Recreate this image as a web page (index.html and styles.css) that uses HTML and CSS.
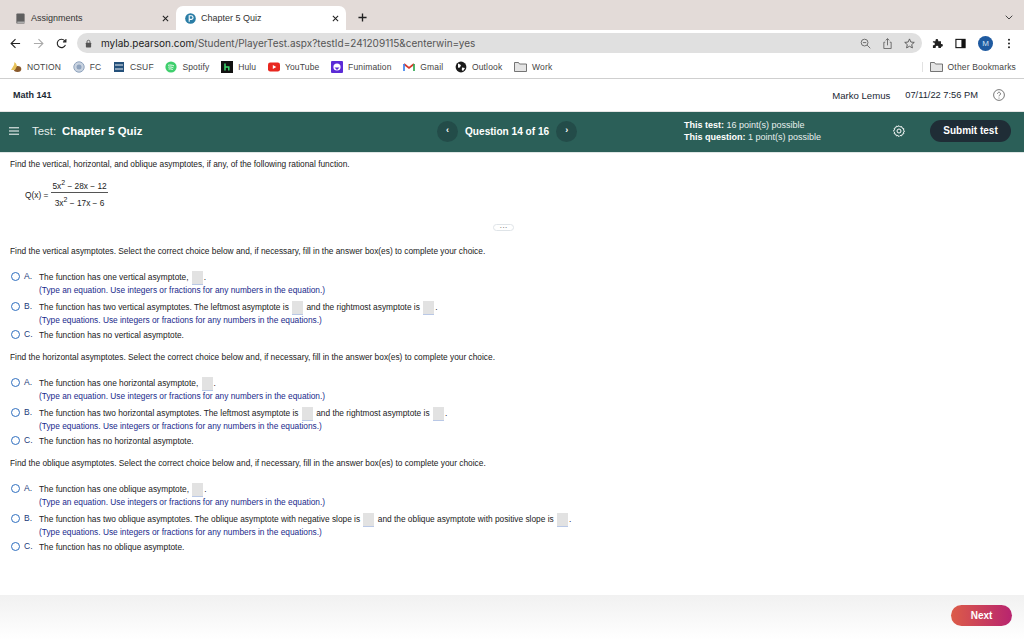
FILE: index.html
```html
<!DOCTYPE html>
<html lang="en">

<head>
    <meta charset="UTF-8">
    <title>Chapter 5 Quiz</title>
    <link rel="stylesheet" href="styles.css">
</head>

<body>
    <!-- Browser chrome -->
    <div class="tabstrip">
        <div class="tab">
            <svg class="tab-icon" viewBox="0 0 12 12"><rect x="1.5" y="0.5" width="9" height="11" rx="1" fill="#5f5f5f"/><rect x="2.5" y="9.5" width="8" height="1" fill="#ddd"/></svg>
            <span class="tab-title">Assignments</span>
            <svg class="tab-close" viewBox="0 0 8 8"><path d="M1 1l6 6M7 1L1 7" stroke="#222" stroke-width="1.2"/></svg>
        </div>
        <div class="tab tab-active">
            <svg class="tab-icon" viewBox="0 0 12 12"><circle cx="6" cy="6" r="5.8" fill="#2a7da6"/><path d="M4.6 9.5V3h2.2a1.9 1.9 0 0 1 0 3.9H4.6" fill="none" stroke="#fff" stroke-width="1.2"/></svg>
            <span class="tab-title">Chapter 5 Quiz</span>
            <svg class="tab-close" viewBox="0 0 8 8"><path d="M1 1l6 6M7 1L1 7" stroke="#222" stroke-width="1.2"/></svg>
        </div>
        <svg class="new-tab" viewBox="0 0 10 10"><path d="M5 .5v9M.5 5h9" stroke="#222" stroke-width="1.5"/></svg>
        <svg class="tabs-menu" viewBox="0 0 8 5"><path d="M.7.7L4 4l3.3-3.3" fill="none" stroke="#444" stroke-width="1"/></svg>
    </div>

    <div class="toolbar">
        <svg class="nav-icon" viewBox="0 0 12 12"><path d="M11 6H1.5M6 1.2L1.2 6 6 10.8" fill="none" stroke="#222" stroke-width="1.2"/></svg>
        <svg class="nav-icon" viewBox="0 0 12 12"><path d="M1 6h9.5M6 1.2L10.8 6 6 10.8" fill="none" stroke="#aaa" stroke-width="1.2"/></svg>
        <svg class="nav-icon" viewBox="0 0 12 12"><path d="M10.3 7.5A4.6 4.6 0 1 1 9.4 2.8L10.8 4.2M10.8 1v3.2H7.6" fill="none" stroke="#222" stroke-width="1.2"/></svg>
        <div class="omnibox">
            <svg class="lock" viewBox="0 0 8 10"><rect x="1" y="4" width="6" height="5.5" rx=".8" fill="#555"/><path d="M2.3 4.5V3a1.7 1.7 0 0 1 3.4 0v1.5" fill="none" stroke="#555"/></svg>
            <span class="url"><b>mylab.pearson.com</b>/Student/PlayerTest.aspx?testId=241209115&amp;centerwin=yes</span>
            <svg class="omni-icon" viewBox="0 0 12 12"><circle cx="5" cy="5" r="3.7" fill="none" stroke="#666"/><path d="M3.2 5h3.6M7.8 7.8l3.4 3.4" stroke="#666"/></svg>
            <svg class="omni-icon" viewBox="0 0 12 12"><path d="M3.5 4.6H2v6.9h8V4.6H8.5M6 8V.8M4 2.6L6 .7l2 1.9" fill="none" stroke="#666"/></svg>
            <svg class="omni-icon" viewBox="0 0 12 12"><path d="M6 1l1.5 3.4 3.7.4-2.8 2.4.8 3.6L6 9l-3.2 1.8.8-3.6L.8 4.8l3.7-.4z" fill="none" stroke="#555"/></svg>
        </div>
        <svg class="ext-icon" viewBox="0 0 12 12"><path d="M1 3.5h2.8v-.9a1.500 1.500 0 0 1 3 0v.9h3v3h.6a1.500 1.500 0 0 1 0 3h-.6V11H7V9.900a1.500 1.500 0 0 0-3 0V11H1V8h.6a1.500 1.500 0 0 0 0-3H1z" fill="#222"/></svg>
        <svg class="ext-icon" viewBox="0 0 12 12"><rect x="1" y="1.5" width="10" height="9" fill="#fff" stroke="#111" stroke-width="1.2"/><rect x="7" y="1.5" width="4" height="9" fill="#111"/></svg>
        <span class="avatar">M</span>
        <svg class="kebab" viewBox="0 0 4 12"><circle cx="2" cy="2" r="1.1" fill="#222"/><circle cx="2" cy="6" r="1.1" fill="#222"/><circle cx="2" cy="10" r="1.1" fill="#222"/></svg>
    </div>

    <div class="bookmarks">
        <span class="bookmark">
            <svg viewBox="0 0 12 12"><ellipse cx="7.5" cy="8" rx="3.8" ry="3" fill="#8a5a2b"/><path d="M1 9l3-5 .5-3L6 2.5l1 2.500-2 4z" fill="#e8c35a"/></svg>NOTION
        </span>
        <span class="bookmark">
            <svg viewBox="0 0 12 12"><circle cx="6" cy="6" r="5.2" fill="#c9d3e0" stroke="#8fa3bd"/><circle cx="6" cy="6" r="2.5" fill="#8fa3bd"/></svg>FC
        </span>
        <span class="bookmark">
            <svg viewBox="0 0 12 12"><rect x="1" y="1" width="10" height="10" fill="#24507a"/><path d="M2 4h8M2 8h8" stroke="#e9eef3"/></svg>CSUF
        </span>
        <span class="bookmark">
            <svg viewBox="0 0 12 12"><circle cx="6" cy="6" r="5.6" fill="#3fcf6d"/><path d="M3 4.3c2-.5 4-.3 6 .6M3.3 6.2c1.800-.4 3.500-.2 5.100.6M3.600 8c1.500-.3 2.900-.1 4.200.5" fill="none" stroke="#fff" stroke-width=".9"/></svg>Spotify
        </span>
        <span class="bookmark">
            <svg viewBox="0 0 12 12"><rect width="12" height="12" fill="#111"/><path d="M4 2.5v7M4 6h3.8v3.5" fill="none" stroke="#3dd66d" stroke-width="1.5"/></svg>Hulu
        </span>
        <span class="bookmark">
            <svg viewBox="0 0 12 12"><rect y="1.5" width="12" height="9" rx="2.2" fill="#e8271f"/><path d="M4.800 4v4L8.300 6z" fill="#fff"/></svg>YouTube
        </span>
        <span class="bookmark">
            <svg viewBox="0 0 12 12"><rect width="12" height="12" rx="1" fill="#5b2bd6"/><circle cx="6" cy="6" r="3.6" fill="#fff"/><path d="M3.5 6.5h5L6 9z" fill="#5b2bd6"/></svg>Funimation
        </span>
        <span class="bookmark">
            <svg viewBox="0 0 12 12"><path d="M1 3l5 4 5-4" fill="none" stroke="#d8382c" stroke-width="1.7"/><path d="M1 3v7" stroke="#3f82ed" stroke-width="1.7"/><path d="M11 3v7" stroke="#32a853" stroke-width="1.7"/></svg>Gmail
        </span>
        <span class="bookmark">
            <svg viewBox="0 0 12 12"><circle cx="6" cy="6" r="5.4" fill="#1c1c1c"/><path d="M3 2.5l3 1.5-1 2.500-2 .2zM7 6.500l3 .5-2 3-1.200-1z" fill="#fff"/></svg>Outlook
        </span>
        <span class="bookmark">
            <svg class="folder" viewBox="0 0 13 10"><path d="M.5 9.5V.5h4l1 1.5h7v7.500z" fill="#e4e4e4" stroke="#555" stroke-width=".8"/></svg>Work
        </span>
        <span class="bookmark bookmark-other">
            <svg class="folder" viewBox="0 0 13 10"><path d="M.5 9.5V.5h4l1 1.5h7v7.500z" fill="#e4e4e4" stroke="#555" stroke-width=".8"/></svg>Other Bookmarks
        </span>
    </div>

    <!-- Course header -->
    <header class="course-bar">
        <span class="course-name">Math 141</span>
        <span class="student">Marko Lemus</span>
        <span class="stamp">07/11/22 7:56 PM</span>
        <svg class="help" viewBox="0 0 12 12"><circle cx="6" cy="6" r="5.4" fill="none" stroke="#555" stroke-width=".8"/><path d="M4.500 4.700a1.500 1.500 0 1 1 2.300 1.300c-.6.4-.8.7-.8 1.300" fill="none" stroke="#555" stroke-width=".8"/><circle cx="6" cy="8.9" r=".5" fill="#555"/></svg>
    </header>

    <div class="test-bar">
        <div class="test-title">
            <svg class="menu-icon" viewBox="0 0 10 8"><path d="M0 .8h10M0 4h10M0 7.2h10" stroke="#fff" stroke-width="1"/></svg>
            <span class="test-label">Test:</span>
            <b class="test-name">Chapter 5 Quiz</b>
        </div>
        <div class="pager">
            <span class="pager-btn">&#8249;</span>
            <b class="pager-text">Question 14 of 16</b>
            <span class="pager-btn">&#8250;</span>
        </div>
        <div class="points">
            <div><b>This test:</b> 16 point(s) possible</div>
            <div><b>This question:</b> 1 point(s) possible</div>
        </div>
        <svg class="gear" viewBox="0 0 12 12"><path d="M6 .7l1.100 1.200 1.600-.3.500 1.600 1.600.5-.3 1.600L11.600 6l-1.100 1.100.3 1.600-1.600.5-.5 1.600-1.600-.3L6 11.600l-1.100-1.100-1.600.3-.5-1.600-1.600-.5.3-1.600L.4 6l1.100-1.100-.3-1.600 1.600-.5.5-1.600 1.600.3z" fill="none" stroke="#fff" stroke-width="1"/><circle cx="6" cy="6" r="2" fill="none" stroke="#fff" stroke-width="1"/></svg>
        <span class="submit-btn">Submit test</span>
    </div>

    <!-- Question -->
    <main class="question">
        <p class="prompt">Find the vertical, horizontal, and oblique asymptotes, if any, of the following rational function.</p>

        <div class="formula">
            <span>Q(x) =</span>
            <span class="fraction">
                <span class="numer">5x<sup>2</sup> &minus; 28x &minus; 12</span>
                <span class="denom">3x<sup>2</sup> &minus; 17x &minus; 6</span>
            </span>
        </div>

        <div class="divider-row"><span class="more-pill">&middot;&middot;&middot;</span></div>

        <section class="part part-first">
            <p class="prompt">Find the vertical asymptotes. Select the correct choice below and, if necessary, fill in the answer box(es) to complete your choice.</p>
            <div class="choice">
                <span class="radio"></span><span class="letter">A.</span>
                <div>
                    <div class="choice-text">The function has one vertical asymptote, <span class="box"></span>.</div>
                    <div class="hint">(Type an equation. Use integers or fractions for any numbers in the equation.)</div>
                </div>
            </div>
            <div class="choice">
                <span class="radio"></span><span class="letter">B.</span>
                <div>
                    <div class="choice-text">The function has two vertical asymptotes. The leftmost asymptote is <span class="box"></span> and the rightmost asymptote is <span class="box"></span>.</div>
                    <div class="hint">(Type equations. Use integers or fractions for any numbers in the equations.)</div>
                </div>
            </div>
            <div class="choice">
                <span class="radio"></span><span class="letter">C.</span>
                <div class="choice-text">The function has no vertical asymptote.</div>
            </div>
        </section>

        <section class="part">
            <p class="prompt">Find the horizontal asymptotes. Select the correct choice below and, if necessary, fill in the answer box(es) to complete your choice.</p>
            <div class="choice">
                <span class="radio"></span><span class="letter">A.</span>
                <div>
                    <div class="choice-text">The function has one horizontal asymptote, <span class="box"></span>.</div>
                    <div class="hint">(Type an equation. Use integers or fractions for any numbers in the equation.)</div>
                </div>
            </div>
            <div class="choice">
                <span class="radio"></span><span class="letter">B.</span>
                <div>
                    <div class="choice-text">The function has two horizontal asymptotes. The leftmost asymptote is <span class="box"></span> and the rightmost asymptote is <span class="box"></span>.</div>
                    <div class="hint">(Type equations. Use integers or fractions for any numbers in the equations.)</div>
                </div>
            </div>
            <div class="choice">
                <span class="radio"></span><span class="letter">C.</span>
                <div class="choice-text">The function has no horizontal asymptote.</div>
            </div>
        </section>

        <section class="part">
            <p class="prompt">Find the oblique asymptotes. Select the correct choice below and, if necessary, fill in the answer box(es) to complete your choice.</p>
            <div class="choice">
                <span class="radio"></span><span class="letter">A.</span>
                <div>
                    <div class="choice-text">The function has one oblique asymptote, <span class="box"></span>.</div>
                    <div class="hint">(Type an equation. Use integers or fractions for any numbers in the equation.)</div>
                </div>
            </div>
            <div class="choice">
                <span class="radio"></span><span class="letter">B.</span>
                <div>
                    <div class="choice-text">The function has two oblique asymptotes. The oblique asymptote with negative slope is <span class="box"></span> and the oblique asymptote with positive slope is <span class="box"></span>.</div>
                    <div class="hint">(Type equations. Use integers or fractions for any numbers in the equations.)</div>
                </div>
            </div>
            <div class="choice">
                <span class="radio"></span><span class="letter">C.</span>
                <div class="choice-text">The function has no oblique asymptote.</div>
            </div>
        </section>
    </main>

    <footer class="page-footer">
        <span class="next-btn">Next</span>
    </footer>
</body>

</html>
```

FILE: styles.css
```css
/* General Styles */
body {
    margin: 0;
    font-family: 'Liberation Sans', Arial, sans-serif;
    color: #222;
    background: #fff;
    display: flex;
    flex-direction: column;
    height: 640px;
    overflow: hidden;
}

svg {
    display: block;
    flex: none;
}

/* Browser chrome */
.tabstrip {
    height: 30px;
    flex: none;
    background: #e3dbd8;
    display: flex;
    align-items: flex-end;
    box-sizing: border-box;
    padding-left: 6px;
}

.tab {
    width: 170px;
    height: 24px;
    box-sizing: border-box;
    padding: 0 7px 0 9px;
    display: flex;
    align-items: center;
    font-size: 9px;
    color: #333;
}

.tab-active {
    background: #fff;
    border-radius: 7px 7px 0 0;
}

.tab-icon {
    width: 11px;
    height: 11px;
    margin-right: 5px;
}

.tab-title {
    flex: 1;
    white-space: nowrap;
}

.tab-close {
    width: 7px;
    height: 7px;
}

.new-tab {
    width: 9px;
    height: 9px;
    margin: 0 0 8px 12px;
}

.tabs-menu {
    width: 8px;
    height: 5px;
    margin: 0 11px 10px auto;
}

.toolbar {
    height: 26px;
    flex: none;
    display: flex;
    align-items: center;
    padding-left: 10px;
    box-sizing: border-box;
}

.nav-icon {
    width: 11px;
    height: 11px;
    margin-right: 12px;
}

.omnibox {
    flex: 1;
    height: 20px;
    margin: 0 10px 0 -2px;
    background: #e0e0e0;
    border-radius: 10px;
    display: flex;
    align-items: center;
    padding: 0 7px 0 8px;
    box-sizing: border-box;
}

.lock {
    width: 7px;
    height: 9px;
    margin-right: 9px;
}

.url {
    flex: 1;
    font-size: 10px;
    color: #555;
    font-family: 'Inter', 'Liberation Sans', sans-serif;
    white-space: nowrap;
}

.url b {
    font-weight: 400;
    color: #222;
}

.omni-icon {
    width: 11px;
    height: 11px;
    margin-left: 11px;
}

.ext-icon {
    width: 11px;
    height: 11px;
    margin: 0 12px 0 0;
}

.avatar {
    width: 15px;
    height: 15px;
    border-radius: 50%;
    background: #1f5aa0;
    color: #cfe0f2;
    font-size: 8px;
    text-align: center;
    line-height: 15px;
    margin-right: 14px;
}

.kebab {
    width: 4px;
    height: 11px;
    margin-right: 13px;
}

.bookmarks {
    height: 23px;
    flex: none;
    box-sizing: border-box;
    border-bottom: 1px solid #cfcfcf;
    display: flex;
    align-items: center;
    padding: 0 8px 0 10px;
    font-size: 8.5px;
    letter-spacing: .15px;
    color: #444;
    gap: 11.7px;
}

.bookmark {
    display: flex;
    align-items: center;
    white-space: nowrap;
}

.bookmark svg {
    width: 12px;
    height: 12px;
    margin-right: 5px;
}

.bookmark svg.folder {
    width: 13px;
    height: 10px;
}

.bookmark-other {
    margin-left: auto;
    border-left: 1px solid #e2e2e2;
    padding-left: 7px;
}

/* Course header */
.course-bar {
    height: 33px;
    flex: none;
    box-sizing: border-box;
    display: flex;
    align-items: center;
    padding: 0 19px 0 13px;
    font-size: 9.6px;
    color: #1a2733;
    border-bottom: 1px solid #e4e4e4;
}

.course-name {
    flex: 1;
    font-size: 9px;
    font-weight: bold;
}

.student {
    margin-right: 15px;
}

.stamp {
    font-size: 9.3px;
    margin-right: 15px;
}

.help {
    width: 12px;
    height: 12px;
}

.test-bar {
    height: 41px;
    flex: none;
    background: #2b5f58;
    color: #fff;
    display: grid;
    grid-template-columns: 437px 247px 1fr auto auto;
    align-items: center;
    padding: 0 13px 2px 0;
    border-bottom: 1px solid #dfe6e5;
    box-sizing: border-box;
}

.test-title {
    display: flex;
    align-items: center;
    padding-left: 9px;
    font-size: 11.4px;
}

.menu-icon {
    width: 10px;
    height: 8px;
    margin-right: 13px;
}

.test-label {
    margin-right: 6px;
    color: #e8efee;
}

.pager {
    display: flex;
    align-items: center;
}

.pager-btn {
    width: 21px;
    height: 21px;
    border-radius: 50%;
    background: #234c49;
    text-align: center;
    line-height: 19px;
    font-size: 9px;
    font-weight: bold;
}

.pager-text {
    font-size: 10.1px;
    margin: 0 7px;
    white-space: nowrap;
}

.points {
    font-size: 9px;
    line-height: 12px;
    color: #e8efee;
}

.points b {
    color: #fff;
}

.gear {
    width: 12px;
    height: 12px;
    margin-right: 25px;
}

.submit-btn {
    width: 81px;
    height: 22px;
    background: #1f2d36;
    border-radius: 11px;
    font-size: 10px;
    font-weight: bold;
    text-align: center;
    line-height: 22px;
}

/* Question */
.question {
    flex: 1;
    padding: 6px 10px 0;
    font-size: 8.33px;
    line-height: 10px;
    color: #222;
}

.prompt {
    margin: 0;
    white-space: nowrap;
}

.formula {
    display: flex;
    align-items: center;
    margin: 12px 0 0 15px;
    gap: 2px;
}

.fraction {
    display: flex;
    flex-direction: column;
    align-items: center;
    padding: 0 1px;
}

.numer {
    padding: 0 1px 1px;
    border-bottom: 1px solid #555;
    white-space: nowrap;
}

.denom {
    padding-top: 5px;
    white-space: nowrap;
}

.formula sup {
    font-size: 7px;
    line-height: 0;
}

.divider-row {
    height: 8px;
    margin-top: 16px;
    display: flex;
    justify-content: flex-end;
    width: 504px;
}

.more-pill {
    width: 21px;
    height: 7px;
    border: 1px solid #dfe4e8;
    border-radius: 4px;
    box-sizing: border-box;
    color: #555;
    font-size: 8px;
    line-height: 5px;
    text-align: center;
}

.part {
    margin-top: 12px;
}

.part-first {
    margin-top: 14px;
}

.choice {
    display: flex;
    margin-top: 7px;
    align-items: flex-start;
}

.choice:last-child {
    margin-top: 5px;
}

.prompt + .choice {
    margin-top: 16px;
}

.choice-text {
    white-space: nowrap;
    height: 10px;
}

.hint {
    margin-top: 3px;
    color: #1a2a8c;
    white-space: nowrap;
}

.radio {
    width: 7px;
    height: 7px;
    margin: 0 4px 0 1px;
    border: 1px solid #2f6fc0;
    border-radius: 50%;
    flex: none;
}

.letter {
    width: 15px;
    flex: none;
    font-size: 8.5px;
    color: #1b3a7a;
    margin-top: -1px;
}

.box {
    display: inline-block;
    width: 11px;
    height: 14px;
    background: #e2e2e2;
    border-bottom: 1px solid #b9c8e6;
    box-sizing: border-box;
    margin: -3px 1px;
    vertical-align: -2px;
}

/* Footer */
.page-footer {
    height: 45px;
    flex: none;
    background: linear-gradient(#f1f1f1, #fff);
    display: flex;
    justify-content: flex-end;
    align-items: flex-start;
    padding: 10px 12px 0 0;
    box-sizing: border-box;
}

.next-btn {
    width: 61px;
    height: 21px;
    border-radius: 11px;
    background: linear-gradient(90deg, #dc5c48, #b8246f);
    color: #fff;
    font-size: 10px;
    font-weight: bold;
    text-align: center;
    line-height: 21px;
}
```
